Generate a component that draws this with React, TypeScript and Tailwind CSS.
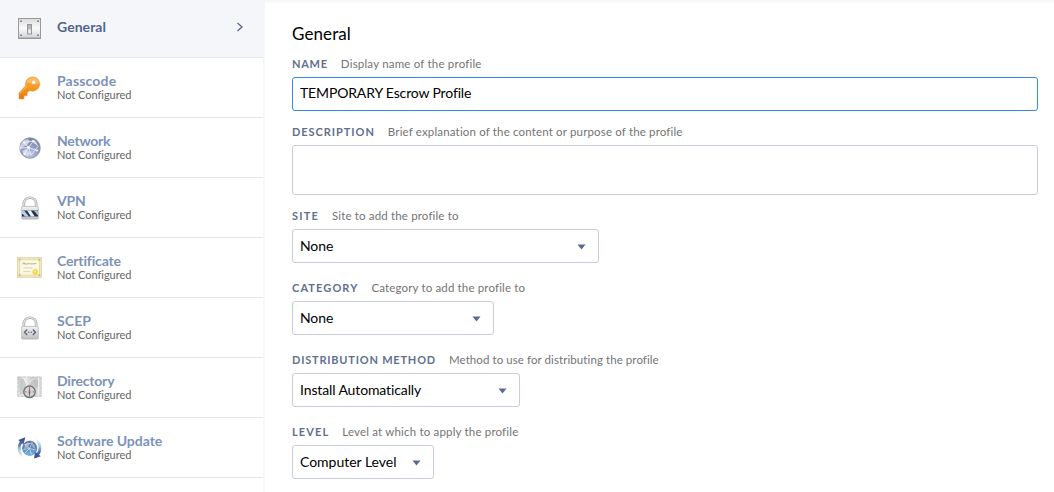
import type { ReactNode } from "react";

function SwitchIcon() {
  return (
    <svg width="24" height="22" viewBox="0 0 24 22">
      <defs>
        <linearGradient id="plate" x1="0" y1="0" x2="0" y2="1">
          <stop offset="0" stopColor="#dcdcdc" />
          <stop offset=".5" stopColor="#fafafa" />
          <stop offset="1" stopColor="#d4d4d4" />
        </linearGradient>
      </defs>
      <rect x="0" y="0" width="23" height="21" fill="#97999c" />
      <rect x="1" y="1" width="21" height="18.500" fill="url(#plate)" />
      <g fill="#85878a">
        <rect x="2" y="2.500" width="2" height="1.500" />
        <rect x="19" y="2.500" width="2" height="1.500" />
        <rect x="2" y="16.500" width="2" height="1.500" />
        <rect x="19" y="16.500" width="2" height="1.500" />
      </g>
      <rect x="9" y="6" width="5" height="10.500" fill="#97999b" />
      <rect x="10.200" y="7.200" width="2.600" height="4.600" fill="#b9bbbd" />
      <rect x="10.200" y="11.400" width="2.700" height="4" fill="#f3f3f3" />
    </svg>
  );
}

function KeyIcon() {
  return (
    <svg width="23" height="24" viewBox="0 0 23.500 24">
      <defs>
        <linearGradient id="key" x1=".5" y1="0" x2=".4" y2="1">
          <stop offset="0" stopColor="#fdb24a" />
          <stop offset=".45" stopColor="#f79a1f" />
          <stop offset="1" stopColor="#e87a12" />
        </linearGradient>
      </defs>
      <path
        d="M15 .6a7.4 7.4 0 0 0-7.3 9.1L1 17v6.2h4.900l.4-3.200h3l.3-3.400 2.300-1.800A8 8 0 0 0 22.400 8.300A7.600 7.600 0 0 0 15 .6Z"
        fill="url(#key)"
        stroke="#e38b2b"
        strokeWidth=".4"
      />
      <path d="M8.700 6.500a6.500 6 0 0 1 12.700-.2c-3.500 3-7.700 1-12.700.2Z" fill="#ffd08a" opacity=".5" />
      <path d="M1.800 17.700 9 10.600" stroke="#ffc36b" strokeWidth=".8" />
      <circle cx="16" cy="6.300" r="2.100" fill="#fff" stroke="#d88a2c" strokeWidth=".4" />
    </svg>
  );
}

function GlobeIcon() {
  return (
    <svg width="24" height="24" viewBox="0 0 24 24">
      <defs>
        <radialGradient id="globe" cx=".5" cy=".8" r=".8">
          <stop offset="0" stopColor="#bccbe6" />
          <stop offset=".55" stopColor="#8c99bc" />
          <stop offset="1" stopColor="#747f9d" />
        </radialGradient>
      </defs>
      <circle cx="12" cy="12" r="10.300" fill="url(#globe)" stroke="#8a8fa5" strokeWidth=".7" />
      <path d="M5 4.500 9.500 3l2.500 2-3 4-4 2-3 4-.500-4Z M13.500 4l4 1 2.500 4-4-1.500Z M4 15l4-2 4 4-2 3.500-4-1.500Z" fill="#e0e5f0" opacity=".75" />
      <g fill="none" stroke="#f2f4fa" strokeWidth=".8">
        <path d="M6 6.500 15.500 5l-5 6.500 8.500 3M6 6.500l4.500 5L6.500 18M15.500 5l4.500 5.500-7 8.500M1.800 12l8.700-.5M10.500 11.500l2.500 7.500" />
      </g>
      <g fill="#fff">
        <circle cx="6" cy="6.500" r="1.100" />
        <circle cx="15.500" cy="5" r="1.100" />
        <circle cx="10.500" cy="11.500" r="1.200" />
        <circle cx="19" cy="14.500" r="1" />
        <circle cx="6.500" cy="18" r="1" />
      </g>
    </svg>
  );
}

function LockBase({ id, children }: { id: string; children: ReactNode }) {
  return (
    <svg width="24" height="24" viewBox="0 0 24 24">
      <defs>
        <linearGradient id={id} x1="0" y1="0" x2="0" y2="1">
          <stop offset="0" stopColor="#f1f1f2" />
          <stop offset="1" stopColor="#bfc0c3" />
        </linearGradient>
      </defs>
      <path d="M5.800 12V7.500a6.200 5.800 0 0 1 12.400 0V12" fill="none" stroke="#a3a5a8" strokeWidth="2.600" />
      <path d="M5.800 12V7.500a6.200 5.800 0 0 1 12.400 0V12" fill="none" stroke="#e3e4e6" strokeWidth="1.300" />
      <rect x="3.700" y="10.400" width="16.600" height="12.700" rx=".7" fill={`url(#${id})`} stroke="#adafb2" strokeWidth=".7" />
      {children}
    </svg>
  );
}

function VpnIcon() {
  return (
    <LockBase id="vpn-lock">
      <rect x="4" y="14.500" width="16" height="6" fill="#293242" />
      <path d="M4 14.500h2l5 6H7l-3-3.200Z" fill="#b8d0ef" />
      <path d="M9 14.500h3.800l4 6H13Z" fill="#e8f0f9" />
      <path d="M15.800 14.500h3.300l.9 1v4Z" fill="#a9c4e7" />
    </LockBase>
  );
}

function ScepIcon() {
  return (
    <LockBase id="scep-lock">
      <path d="M9.100 13.600 6.600 16.300l2.500 2.700M14.900 13.600l2.500 2.700-2.500 2.700" fill="none" stroke="#5b6a80" strokeWidth="1.500" />
      <path d="M10.200 15.600h1.100v1.500h-1.100Zm2.500 0h1.100v1.500h-1.100Z" fill="#5b6a80" />
    </LockBase>
  );
}

function CertificateIcon() {
  return (
    <svg width="25" height="21" viewBox="0 0 26 21.500">
      <rect x=".5" y=".5" width="25" height="20.500" fill="#f2e9c4" stroke="#dccfa5" strokeWidth=".8" />
      <rect x="2.800" y="2.700" width="20.500" height="16" fill="#fbf8e4" stroke="#e2d49a" strokeWidth=".8" />
      <g fill="#c9b45e" opacity=".8">
        <circle cx="2.700" cy="2.700" r="1.200" />
        <circle cx="23.300" cy="2.700" r="1.200" />
        <circle cx="2.700" cy="18.800" r="1.200" />
        <circle cx="23.300" cy="18.800" r="1.200" />
      </g>
      <path d="M6 7.500c.5-2.500 2.300-2 1.300-.3 1.600-1.500 1.900 1.300 3.300-.5 1 1.500 2-1.200 3 .2 1 1 1.800-1 2.800 0 1.200.7 2-.8 3.600-.2" fill="none" stroke="#aaa583" strokeWidth="1" />
      <path d="M7 11.200c1-1.500 1.800.8 3 0s2 .5 3 0 2 .4 3 0M6.500 15c1-.8 2 .5 3.500 0 1.500-.6 2.500.5 4 0" fill="none" stroke="#c8c3a3" strokeWidth=".8" />
      <circle cx="19" cy="15.300" r="2.700" fill="#f5da45" stroke="#ead05c" strokeWidth=".5" />
      <circle cx="18.600" cy="14.800" r="1.200" fill="#faed83" />
    </svg>
  );
}

function DirectoryIcon() {
  return (
    <svg width="25" height="23" viewBox="0 0 26 24">
      <defs>
        <linearGradient id="map" x1="0" y1="0" x2="1" y2=".2">
          <stop offset="0" stopColor="#c7c8c8" />
          <stop offset=".35" stopColor="#eeeeef" />
          <stop offset=".65" stopColor="#c5c6c7" />
          <stop offset="1" stopColor="#dedfdf" />
        </linearGradient>
      </defs>
      <rect x=".8" y="1" width="24.400" height="20.200" fill="url(#map)" stroke="#b0b0b0" strokeWidth=".7" strokeDasharray="4 .8" />
      <path d="M3 3h4l3 6-3 10H3ZM17 4h5v7l-3 2Z" fill="#b3b5b6" opacity=".55" />
      <path d="M7 1.500 10 9 7 21M22.500 1.500V21M10 9l9-7.500" stroke="#f4f4f4" strokeWidth=".8" fill="none" />
      <circle cx="13" cy="16.500" r="6" fill="#d3d5d6" stroke="#75787b" strokeWidth="1.500" />
      <path d="M13 11.500V13M13 20v1.500M8.200 16.500h1.500M16.300 16.500h1.500" stroke="#65686b" strokeWidth=".8" />
      <path d="m13 11.800 1 4.700h-2Z" fill="#d0524d" />
      <path d="m13 21.200 1-4.700h-2Z" fill="#555e68" />
    </svg>
  );
}

function UpdateIcon() {
  return (
    <svg width="26" height="24" viewBox="0 0 26 24">
      <defs>
        <linearGradient id="world" x1="0" y1="0" x2="0" y2="1">
          <stop offset="0" stopColor="#51658f" />
          <stop offset=".5" stopColor="#5f82b5" />
          <stop offset="1" stopColor="#60c4ef" />
        </linearGradient>
        <linearGradient id="arrow-up" x1="0" y1="0" x2="0" y2="1">
          <stop offset="0" stopColor="#354488" />
          <stop offset=".3" stopColor="#4c67a5" />
          <stop offset=".6" stopColor="#9fcbe8" />
          <stop offset="1" stopColor="#e6f6fd" />
        </linearGradient>
        <linearGradient id="arrow-down" x1="0" y1="1" x2="0" y2="0">
          <stop offset="0" stopColor="#354488" />
          <stop offset=".3" stopColor="#4c67a5" />
          <stop offset=".6" stopColor="#9fcbe8" />
          <stop offset="1" stopColor="#e6f6fd" />
        </linearGradient>
      </defs>
      <circle cx="13.200" cy="12.200" r="7.500" fill="url(#world)" stroke="#637198" strokeWidth=".6" />
      <path d="M8 8.500 11 6l2.500 1-2 4-4 2ZM15.500 6.500l3 2.500.5 4-3-2Z" fill="#a9b9d4" opacity=".8" />
      <path d="m8 8.500 8-2-3 6 6 1.500M8 8.500l5 4-4.500 4.500M13 12.500l2 6M6.500 13.500l6.500-1" fill="none" stroke="#e4effa" strokeWidth=".7" />
      <path d="M6.800 22A11.500 11.500 0 0 1 .8 12 12 12 0 0 1 3 5.300L1.300 3.800 8.600.7 6.800 8.600 5.200 7.100A9.500 9.500 0 0 0 3.800 12.500c0 4 1.300 7 3 9.500Z" fill="url(#arrow-up)" />
      <path d="M19.200 2A11.500 11.500 0 0 1 25.300 12.300 12 12 0 0 1 23 19.200l1.800 1.500-7 2.300.9-7.300 2.100 1.600a9.500 9.500 0 0 0 1.500-5.300C22.300 8 21 4.500 19.200 2Z" fill="url(#arrow-down)" />
    </svg>
  );
}

const payloads: { name: string; icon: ReactNode; track: string }[] = [
  { name: "Passcode", icon: <KeyIcon />, track: "tracking-[0.17px]" },
  { name: "Network", icon: <GlobeIcon />, track: "tracking-[-0.25px]" },
  { name: "VPN", icon: <VpnIcon />, track: "tracking-[-0.25px]" },
  { name: "Certificate", icon: <CertificateIcon />, track: "tracking-[-0.15px]" },
  { name: "SCEP", icon: <ScepIcon />, track: "tracking-[0.1px]" },
  { name: "Directory", icon: <DirectoryIcon />, track: "tracking-[-0.2px]" },
  { name: "Software Update", icon: <UpdateIcon />, track: "tracking-[-0.02px]" },
];

function FieldLabel({ label, help, labelTrack, helpTrack }: { label: string; help: string; labelTrack: string; helpTrack: string }) {
  return (
    <div className="flex h-[14px] items-center whitespace-nowrap leading-[14px]">
      <span className={`mr-[13px] text-[11px] font-bold text-[#626f8f] ${labelTrack}`}>{label}</span>
      <span className={`text-[11.5px] text-[#747474] ${helpTrack}`}>{help}</span>
    </div>
  );
}

function Select({ value, width, track }: { value: string; width: string; track: string }) {
  return (
    <button
      type="button"
      className={`mt-[6px] flex h-[34px] items-center justify-between rounded-[3px] border border-[#c9ccd9] bg-white pr-[12px] pl-[7px] text-left text-[14px] text-black ${width}`}
    >
      <span className={`pb-[2px] whitespace-nowrap ${track}`}>{value}</span>
      <svg width="9" height="6" viewBox="0 0 9 6" className="mt-[1px]">
        <path d="M.5.5h8l-4 5Z" fill="#5a6a90" />
      </svg>
    </button>
  );
}

export default function App() {
  return (
    <div className="flex h-[492px] w-[1054px] overflow-hidden bg-white font-['Lato',sans-serif]">
      <nav className="w-[265px] shrink-0 border-r-2 border-[#f4f4fb]">
        <div className="flex h-[58px] items-center border-b border-[#e3e6ed] bg-[#f4f6fa] pt-[0px] pr-[19px] pl-[18px]">
          <SwitchIcon />
          <span className="ml-[15px] flex-1 pb-[4px] text-[14px] font-bold tracking-[0.05px] text-[#56658a]">General</span>
          <svg width="8" height="10" viewBox="0 0 8 10" className="mb-[4px]">
            <path d="m1.500 1 4.500 4-4.500 4" fill="none" stroke="#56658a" strokeWidth="1.300" />
          </svg>
        </div>
        {payloads.map((p) => (
          <div key={p.name} className="flex h-[60px] items-center border-b border-[#e6e7eb]">
            <div className="ml-[17px] flex w-[25px] justify-center">{p.icon}</div>
            <div className="ml-[15px] pb-[2px] whitespace-nowrap">
              <div className={`text-[14px] leading-[15px] font-bold text-[#7c92b9] ${p.track}`}>{p.name}</div>
              <div className="text-[11px] leading-[13px] tracking-[-0.03px] text-[#666]">Not Configured</div>
            </div>
          </div>
        ))}
      </nav>

      <main className="flex-1 bg-[linear-gradient(#f5f5f5,#ffffff_4px)] pr-[16px] pl-[27px]">
        <h1 className="pt-[24px] text-[17px] leading-[20px] tracking-[0.1px] text-black">General</h1>
        <div className="pt-[13px]">
          <FieldLabel label="NAME" help="Display name of the profile" labelTrack="tracking-[0.75px]" helpTrack="tracking-[0.2px]" />
          <input
            type="text"
            defaultValue="TEMPORARY Escrow Profile"
            className="mt-[6px] block h-[34px] w-full rounded-[3px] border border-[#348bf0] bg-white px-[7px] pb-[3px] text-[14px] tracking-[-0.15px] text-black outline-none"
          />
        </div>
        <div className="pt-[14px]">
          <FieldLabel label="DESCRIPTION" help="Brief explanation of the content or purpose of the profile" labelTrack="tracking-[0.95px]" helpTrack="tracking-[0.16px]" />
          <textarea className="mt-[6px] block h-[50px] w-full resize-none rounded-[3px] border border-[#c9cbd4] bg-white outline-none" />
        </div>
        <div className="pt-[14px]">
          <FieldLabel label="SITE" help="Site to add the profile to" labelTrack="tracking-[1.2px]" helpTrack="tracking-[0.15px]" />
          <Select value="None" width="w-[307px]" track="tracking-[-0.1px]" />
        </div>
        <div className="pt-[18px]">
          <FieldLabel label="CATEGORY" help="Category to add the profile to" labelTrack="tracking-[1.1px]" helpTrack="tracking-[0.15px]" />
          <Select value="None" width="w-[202px]" track="tracking-[-0.1px]" />
        </div>
        <div className="pt-[18px]">
          <FieldLabel label="DISTRIBUTION METHOD" help="Method to use for distributing the profile" labelTrack="tracking-[0.79px]" helpTrack="tracking-[0.08px]" />
          <Select value="Install Automatically" width="w-[228px]" track="tracking-[-0.12px]" />
        </div>
        <div className="pt-[18px]">
          <FieldLabel label="LEVEL" help="Level at which to apply the profile" labelTrack="tracking-[1.1px]" helpTrack="tracking-[0.18px]" />
          <Select value="Computer Level" width="w-[142px]" track="tracking-[-0.02px]" />
        </div>
      </main>
    </div>
  );
}
